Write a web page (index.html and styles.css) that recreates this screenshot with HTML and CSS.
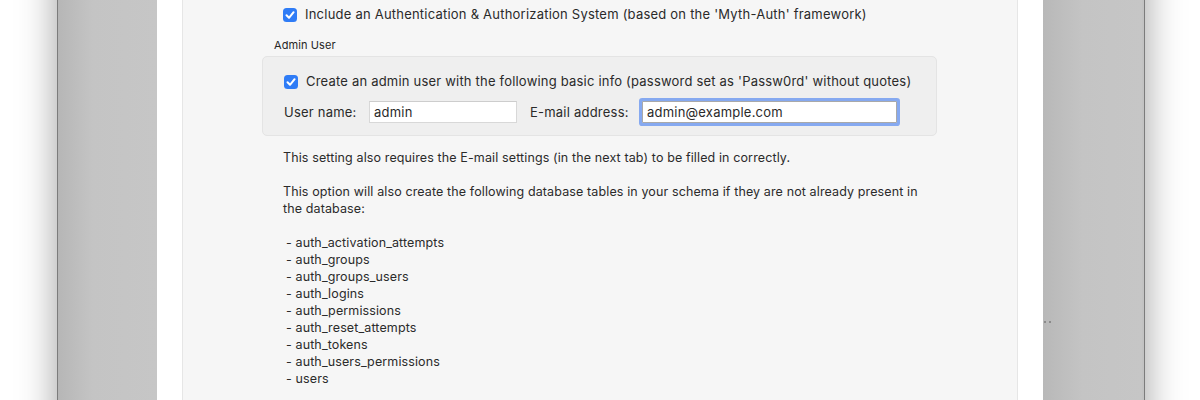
FILE: index.html
```html
<!DOCTYPE html>
<html>
<head>
<meta charset="utf-8">
<link rel="stylesheet" href="styles.css">
</head>
<body>
<div class="window">
  <div class="side side-left"></div>
  <div class="sheet">
    <div class="panel">
      <label class="check-row top-row">
        <span class="checkbox"><svg viewBox="0 0 14 14" width="14" height="14"><path d="M3.5 7.3 L6 9.8 L10.6 4.2" fill="none" stroke="#fff" stroke-width="2" stroke-linecap="round" stroke-linejoin="round"/></svg></span>
        <span class="line1">Include an Authentication &amp; Authorization System (based on the 'Myth-Auth' framework)</span>
      </label>
      <div class="group-title">Admin User</div>
      <div class="group">
        <label class="check-row">
          <span class="checkbox"><svg viewBox="0 0 14 14" width="14" height="14"><path d="M3.5 7.3 L6 9.8 L10.6 4.2" fill="none" stroke="#fff" stroke-width="2" stroke-linecap="round" stroke-linejoin="round"/></svg></span>
          <span class="line2">Create an admin user with the following basic info (password set as 'Passw0rd' without quotes)</span>
        </label>
        <div class="field-row">
          <span class="field-label user-label">User name:</span>
          <span class="input input-user">admin</span>
          <span class="field-label email-label">E-mail address:</span>
          <span class="input input-email">admin@example.com</span>
        </div>
      </div>
      <div class="desc">
        <p>This setting also requires the E-mail settings (in the next tab) to be filled in correctly.</p>
        <p>This option will also create the following database tables in your schema if they are not already present in the database:</p>
        <ul class="tables">
          <li>- auth_activation_attempts</li>
          <li>- auth_groups</li>
          <li>- auth_groups_users</li>
          <li>- auth_logins</li>
          <li>- auth_permissions</li>
          <li>- auth_reset_attempts</li>
          <li>- auth_tokens</li>
          <li>- auth_users_permissions</li>
          <li>- users</li>
        </ul>
      </div>
    </div>
  </div>
  <div class="side side-right"><span class="grip"></span></div>
</div>
</body>
</html>
```
FILE: styles.css
```css
html, body {
  margin: 0;
  padding: 0;
  background: #ffffff;
  overflow: hidden;
  height: 400px;
}
body {
  font-family: Inter, "Liberation Sans", Arial, sans-serif;
  font-size: 13px;
  color: #2a2a2a;
  letter-spacing: 0.22px;
}
.window {
  display: flex;
  margin-left: 57px;
  width: 1086px;
  height: 520px;
  margin-top: -60px;
  border-left: 1px solid #7c7c7c;
  border-right: 1px solid #7c7c7c;
  box-shadow: 0 0 36px rgba(0, 0, 0, 0.38);
  background: #c3c3c3;
}
.side {
  width: 99px;
  flex: none;
  background: linear-gradient(90deg, #b6b6b6 0%, #c4c4c4 35%, #c6c6c6 100%);
}
.side-right {
  background: linear-gradient(90deg, #b8b8b8 0%, #c4c4c4 40%, #c6c6c6 100%);
  padding-top: 381px;
  box-sizing: border-box;
}
.grip {
  display: block;
  width: 7px;
  height: 2px;
  margin-left: 1px;
  background: radial-gradient(circle at 1px 1px, #8a8a8a 1px, transparent 1.2px) 0 0 / 5px 2px repeat-x;
}
.sheet {
  width: 886px;
  flex: none;
  background: #ffffff;
  padding: 0 25px;
  box-sizing: border-box;
}
.panel {
  height: 100%;
  background: #f6f6f6;
  border-left: 1px solid #e6e6e6;
  border-right: 1px solid #e6e6e6;
  padding: 60px 0 0 79px;
  box-sizing: border-box;
}
.check-row {
  display: flex;
  align-items: center;
  gap: 8px;
  height: 17px;
  padding-left: 21px;
  line-height: 17px;
  white-space: nowrap;
}
.top-row {
  margin-top: 6px;
}
.checkbox {
  width: 14px;
  height: 14px;
  border-radius: 3.5px;
  background: #2f7cf6;
  display: flex;
  align-items: center;
  justify-content: center;
  flex: none;
}
.checkbox svg { display: block; }
.line2 {
  letter-spacing: 0.2px;
}
.group-title {
  font-size: 11px;
  letter-spacing: 0.1px;
  color: #262626;
  margin-top: 16px;
  padding-left: 12px;
  height: 13px;
  line-height: 13px;
}
.group {
  width: 675px;
  box-sizing: border-box;
  margin-top: 4px;
  background: #efefef;
  border: 1px solid #e4e4e4;
  border-radius: 5px;
  padding: 16px 0 11px 0;
}
.field-row {
  display: flex;
  align-items: center;
  padding-left: 21px;
  margin-top: 9px;
  height: 25px;
  white-space: nowrap;
}
.field-label {
  color: #2a2a2a;
}
.user-label {
  width: 85px;
  flex: none;
}
.input {
  display: block;
  flex: none;
  background: #ffffff;
  height: 22px;
  line-height: 20px;
  box-sizing: border-box;
  padding-left: 4px;
  border: 1px solid #d8d8d8;
  border-top-color: #cdcdcd;
  color: #2a2a2a;
}
.input-user {
  width: 148px;
}
.email-label {
  margin-left: 13px;
  width: 112px;
  flex: none;
}
.input-email {
  width: 255px;
  border: 1px solid #a9a9a9;
  box-shadow: 0 0 0 3px #86a9f0;
  border-radius: 1px;
}
.desc {
  padding-left: 21px;
  padding-top: 13px;
  line-height: 17px;
  color: #2b2b2b;
  width: 645px;
  font-size: 12.5px;
  letter-spacing: 0.12px;
}
.desc p {
  margin: 0 0 17px 0;
}
.tables {
  list-style: none;
  margin: 0;
  padding: 0 0 0 3px;
}
```
